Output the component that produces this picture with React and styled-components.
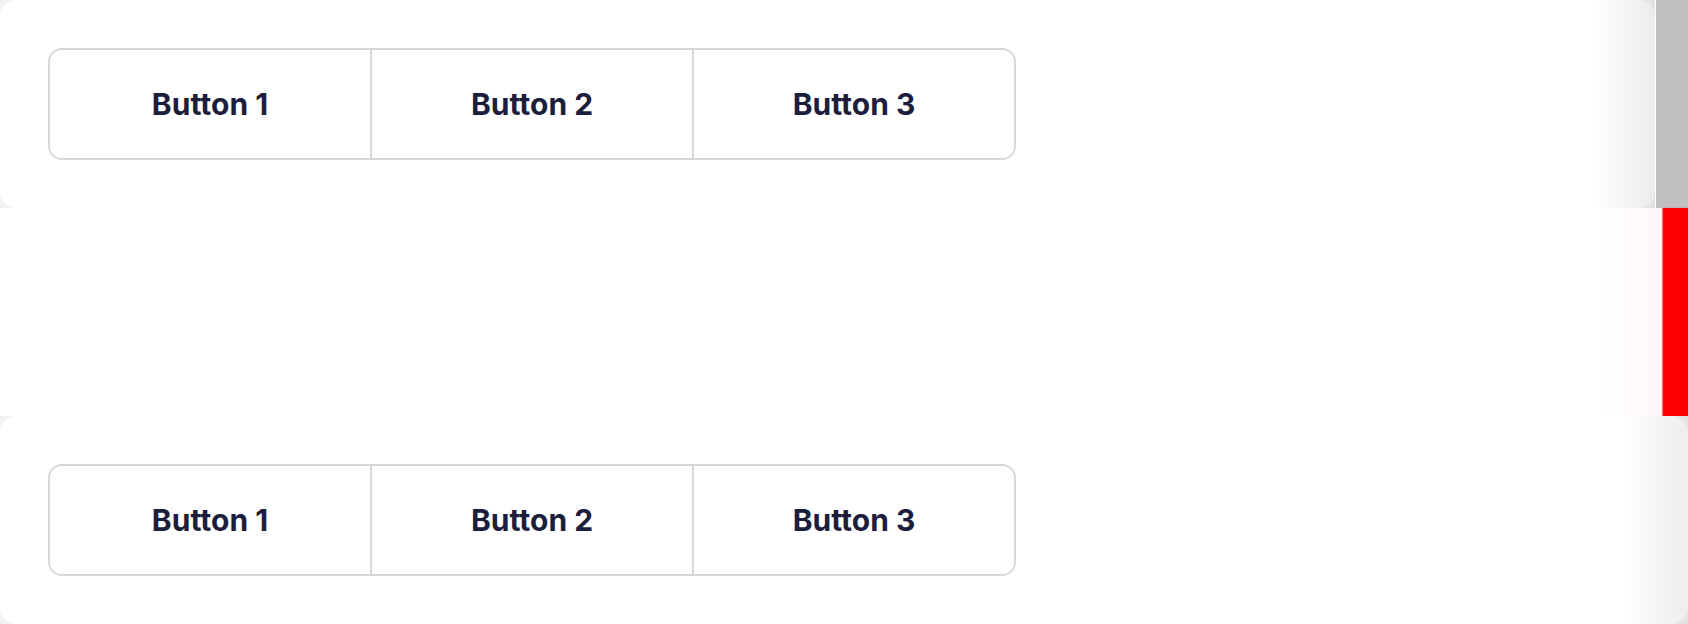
import React from 'react';
import styled, {createGlobalStyle} from 'styled-components';

const GlobalStyle = createGlobalStyle`
  html, body {
    margin: 0;
    padding: 0;
    background: #ffffff;
  }
  body {
    font-family: Inter, "Liberation Sans", sans-serif;
  }
`;

const Page = styled.div`
  width: 1688px;
  height: 624px;
  display: grid;
  grid-template-rows: 208px 208px 208px;
  overflow: hidden;
`;

const Section = styled.div`
  position: relative;
  display: flex;
  background: ${p => (p.$tint ? '#f3f3f3' : '#ffffff')};
`;

const Card = styled.div`
  flex: 1;
  background: #ffffff;
  border-radius: 16px;
  padding: 48px;
  box-sizing: border-box;
`;

const ButtonGroup = styled.div`
  display: flex;
  width: 968px;
  height: 112px;
  box-sizing: border-box;
  border: 2px solid #d8d8d8;
  border-radius: 14px;
  overflow: hidden;
`;

const GroupButton = styled.button`
  flex: 1;
  border: none;
  padding: 0;
  background: #ffffff;
  font-family: Inter, "Liberation Sans", sans-serif;
  font-weight: 700;
  font-size: 30px;
  letter-spacing: 0;
  color: #1c1e3c;
  cursor: pointer;
  & + & {
    border-left: 2px solid #d8d8d8;
  }
`;

const EdgeShade = styled.div`
  position: absolute;
  top: 0;
  bottom: 0;
  right: ${p => p.$right}px;
  width: ${p => p.$width}px;
  pointer-events: none;
  background: linear-gradient(to right, rgba(255, 255, 255, 0), ${p => p.$color});
`;

const Thumb = styled.div`
  width: 32px;
  flex: none;
  background: #c0c0c0;
  border-left: 1px solid #ffffff;
`;

const RedBar = styled.div`
  width: 25px;
  flex: none;
  background: #ff0000;
  box-shadow: -1px 0 1px rgba(255, 0, 0, 0.5);
`;

const Spacer = styled.div`
  flex: 1;
`;

const Group = () => (
  <ButtonGroup>
    <GroupButton>Button 1</GroupButton>
    <GroupButton>Button 2</GroupButton>
    <GroupButton>Button 3</GroupButton>
  </ButtonGroup>
);

export default function App() {
  return (
    <>
      <GlobalStyle />
      <Page>
        <Section $tint>
          <Card>
            <Group />
          </Card>
          <EdgeShade $right={33} $width={64} $color="rgba(0,0,0,0.08)" />
          <Thumb />
        </Section>
        <Section>
          <Spacer />
          <EdgeShade $right={25} $width={64} $color="rgba(255,0,0,0.035)" />
          <RedBar />
        </Section>
        <Section $tint>
          <Card>
            <Group />
          </Card>
          <EdgeShade $right={0} $width={64} $color="rgba(0,0,0,0.07)" />
        </Section>
      </Page>
    </>
  );
}
